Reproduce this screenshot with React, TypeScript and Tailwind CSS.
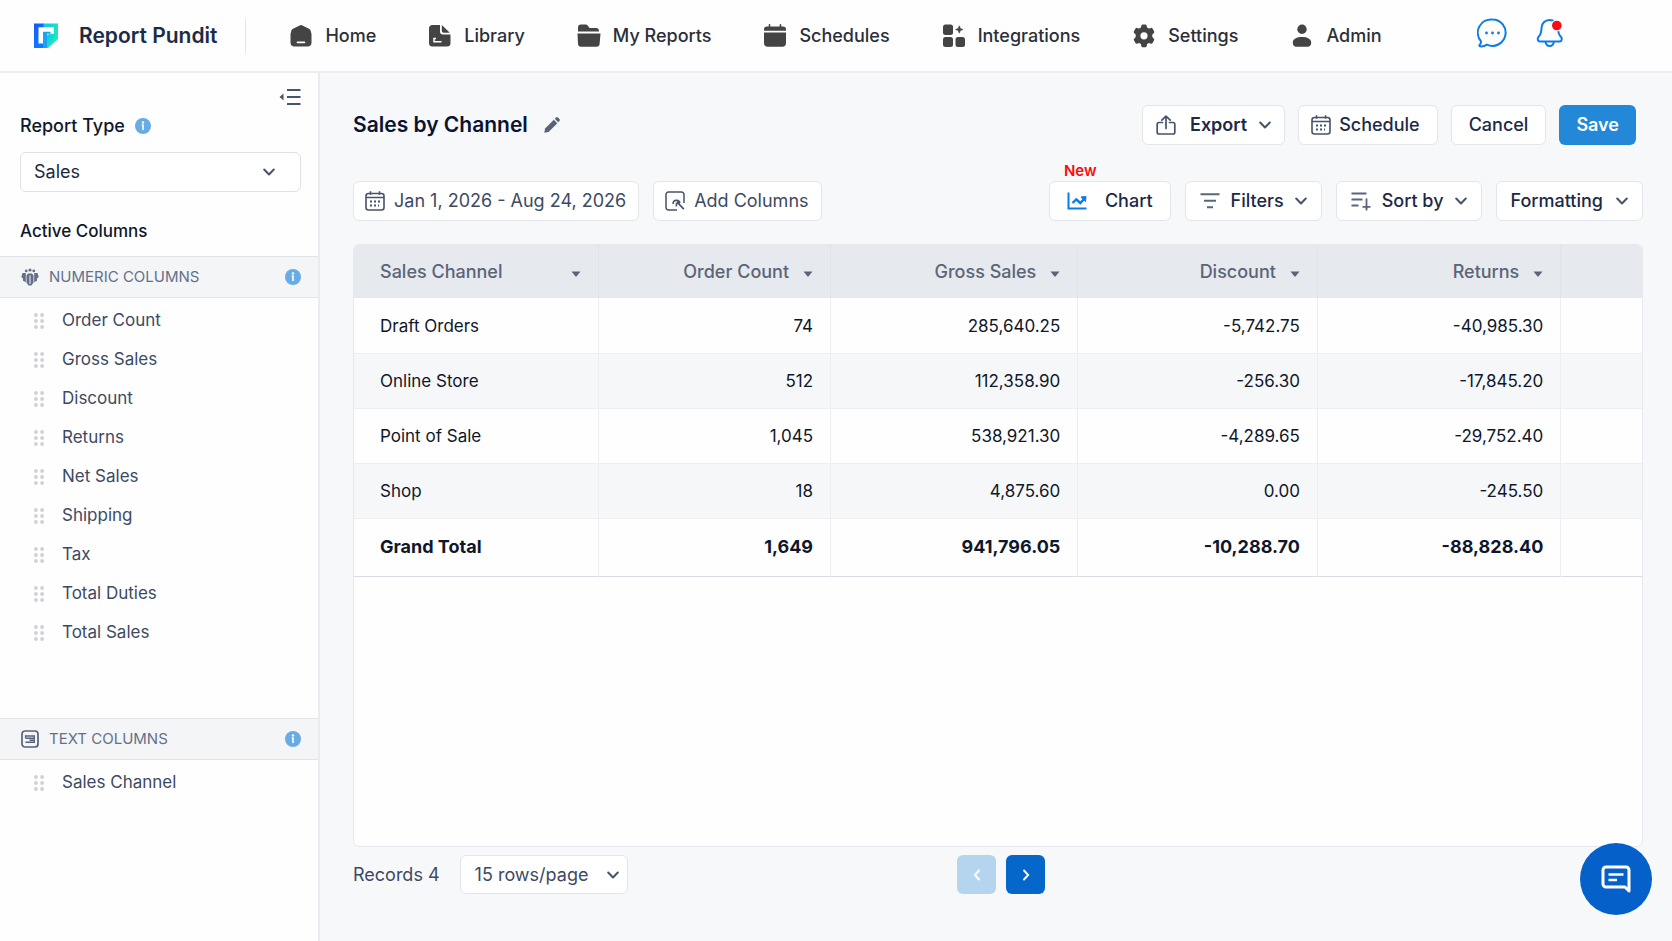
import React from "react";

type IconProps = { className?: string };

function Logo() {
  return (
    <svg className="w-6 h-[26px]" viewBox="0 0 24 26" aria-hidden="true">
      <defs>
        <linearGradient id="logo-left" x1="0" y1="0" x2="0.4" y2="1">
          <stop offset="0" stopColor="#1657ff" />
          <stop offset="1" stopColor="#0a7cff" />
        </linearGradient>
        <linearGradient id="logo-right" x1="0" y1="0" x2="1" y2="0.6">
          <stop offset="0" stopColor="#12c4e8" />
          <stop offset="1" stopColor="#19f0b4" />
        </linearGradient>
      </defs>
      <path d="M0 .5h10v24.500H0z" fill="url(#logo-left)" />
      <path d="M9.500.5H24v15.500L14 25H9.500z" fill="url(#logo-right)" />
      <path d="M4.500 4.300h15.300v6.500H16l-2.500 2v-1L9 20.500H4.500z" fill="#fff" />
      <path d="M9 8.700h7.500v2H13V25H9z" fill="#1aa2f5" />
      <path d="M13.500 11.500h10.500L13.500 21.500z" fill="url(#logo-right)" />
    </svg>
  );
}

function HomeIcon() {
  return (
    <svg className="w-6 h-6" viewBox="0 0 24 24" aria-hidden="true">
      <path
        d="M10.600 1.400a3 3 0 0 1 2.800 0l6.600 3.300a3 3 0 0 1 1.600 1.900l.9 3.400v8.500a4 4 0 0 1-4 4h-13a4 4 0 0 1-4-4V10l.9-3.400A3 3 0 0 1 4 4.700z"
        fill="#444"
      />
      <path d="M8.500 18.300h7" stroke="#fff" strokeWidth="1.700" strokeLinecap="round" />
    </svg>
  );
}

function LibraryIcon() {
  return (
    <svg className="w-6 h-6" viewBox="0 0 24 24" aria-hidden="true">
      <path
        d="M4.500 1h7.500v6.500a3 3 0 0 0 3 3h7.500v8.500a3.500 3.500 0 0 1-3.500 3.500H4.500A3.500 3.500 0 0 1 1 19V4.500A3.500 3.500 0 0 1 4.500 1z"
        fill="#444"
      />
      <path d="M13.800 1l8 7.800h-6a2 2 0 0 1-2-2z" fill="#444" />
      <path d="M8 14.500H6v3.300h7.500" stroke="#fff" strokeWidth="1.500" fill="none" />
    </svg>
  );
}

function FolderIcon() {
  return (
    <svg className="w-6 h-6" viewBox="0 0 24 24" fill="#444" aria-hidden="true">
      <path d="M1 7.500V3.500a3 3 0 0 1 3-3h4.500a3 3 0 0 1 2.400 1.200L12.500 4H19a3 3 0 0 1 3 3v.5z" />
      <path d="M.5 9.500h23L22.600 20a3 3 0 0 1-3 2.700H4a3 3 0 0 1-3-2.700z" />
    </svg>
  );
}

function CalendarSolidIcon() {
  return (
    <svg className="w-6 h-6" viewBox="0 0 24 24" fill="#444" aria-hidden="true">
      <path d="M6.500.8v3M17.500.8v3" stroke="#444" strokeWidth="1.600" strokeLinecap="round" />
      <path d="M1 6.800V5.500A3 3 0 0 1 4 2.500h16a3 3 0 0 1 3 3v1.300z" />
      <path d="M1 8.500h22V19a3.700 3.700 0 0 1-3.700 3.700H4.700A3.700 3.700 0 0 1 1 19z" />
    </svg>
  );
}

function IntegrationsIcon() {
  return (
    <svg className="w-6 h-6" viewBox="0 0 24 24" fill="#444" aria-hidden="true">
      <rect x="1" y="0.500" width="10" height="10.500" rx="2.500" />
      <rect x="1" y="13" width="10" height="10" rx="2.500" />
      <rect x="13.500" y="13" width="9.500" height="10" rx="2.500" />
      <path d="M17.300 1.800l1.100 2.600 2.600 1.100-2.600 1.100-1.100 2.600-1.100-2.600-2.600-1.100 2.600-1.100z" stroke="#444" strokeWidth="0.600" />
    </svg>
  );
}

function GearIcon() {
  return (
    <svg className="w-6 h-6" viewBox="0 0 24 24" fill="#444" aria-hidden="true">
      <path
        fillRule="evenodd"
        d="M10.600.4h2.800c.6 0 1 .4 1.200 1l.5 2.200 1.700 1 2.200-.7c.6-.2 1.200 0 1.500.6l1.600 2.800c.3.600.2 1.200-.2 1.600l-1.600 1.700v2.400l1.600 1.700c.4.400.5 1 .2 1.600l-1.600 2.800c-.3.600-.9.800-1.500.6l-2.200-.7-1.700 1-.5 2.200c-.2.600-.6 1-1.200 1h-2.800c-.6 0-1-.4-1.200-1l-.5-2.200-1.700-1-2.200.7c-.6.2-1.200 0-1.500-.6l-1.600-2.800c-.3-.6-.2-1.200.2-1.600L3.700 13v-2.400L2.100 8.900c-.4-.4-.5-1-.2-1.600l1.600-2.800c.3-.6.9-.8 1.500-.6l2.200.7 1.700-1 .5-2.200c.2-.6.600-1 1.200-1zM12 8.200a3.600 3.600 0 1 0 0 7.200 3.600 3.600 0 0 0 0-7.200z"
      />
    </svg>
  );
}

function UserIcon() {
  return (
    <svg className="w-6 h-6" viewBox="0 0 24 24" fill="#444" aria-hidden="true">
      <circle cx="12" cy="5.200" r="4.700" />
      <path d="M2.800 18.500c0-3.600 4-5.500 9.200-5.500s9.200 1.900 9.200 5.500-2.200 4.300-5 4.300H7.800c-2.800 0-5-.7-5-4.300z" />
    </svg>
  );
}

function ChatIcon() {
  return (
    <svg className="w-[30px] h-[30px]" viewBox="0 0 30 30" fill="none" aria-hidden="true">
      <path
        d="M15.500 1.500a13.200 13.200 0 1 1-5.600 25.200c-1.800 1.200-4.300 1.900-6.900 1.600-.8-.1-.9-.8-.4-1.300 1-1 1.500-2.200 1.300-3.900A13.200 13.200 0 0 1 15.500 1.500z"
        stroke="#0b7be8"
        strokeWidth="2"
        strokeLinejoin="round"
      />
      <circle cx="9.500" cy="15" r="1.400" fill="#0b7be8" />
      <circle cx="15.500" cy="15" r="1.400" fill="#0b7be8" />
      <circle cx="21.500" cy="15" r="1.400" fill="#0b7be8" />
    </svg>
  );
}

function BellIcon() {
  return (
    <svg className="w-[30px] h-[30px]" viewBox="0 0 30 30" fill="none" aria-hidden="true">
      <path
        d="M14.500 2C9.800 2 6.800 5.400 6.600 9.500c-.2 4.800-.6 7-3 9.300-1.600 1.600-1 4.700 1.400 4.700h19.500c2.400 0 3-3.100 1.400-4.700-2.300-2.300-2.900-4.500-3.100-9.300C22.600 5.400 19.200 2 14.500 2z"
        stroke="#0b7be8"
        strokeWidth="2"
      />
      <path d="M10.500 24c.5 2.600 2 4 4.200 4s3.700-1.400 4.200-4" stroke="#0b7be8" strokeWidth="2" />
      <circle cx="21.800" cy="7.500" r="6" fill="#fff" />
      <circle cx="21.800" cy="7.500" r="4.800" fill="#ff0a14" />
    </svg>
  );
}

function CollapseIcon() {
  return (
    <svg className="w-[22px] h-[18px]" viewBox="0 0 22 18" aria-hidden="true">
      <path d="M8 2h13.500M8 9h13.500M8 16h13.500" stroke="#475569" strokeWidth="1.900" />
      <path d="M4.500 5.500v7L.5 9z" fill="#475569" />
    </svg>
  );
}

function InfoIcon() {
  return (
    <svg className="w-4 h-4" viewBox="0 0 16 16" aria-hidden="true">
      <circle cx="8" cy="8" r="8" fill="#67ace4" />
      <circle cx="8" cy="4.400" r="1.200" fill="#fff" />
      <path d="M6.700 7H8v5" stroke="#fff" strokeWidth="1.600" fill="none" />
    </svg>
  );
}

function Chevron({ className = "" }: IconProps) {
  return (
    <svg className={`w-3 h-3 text-[#475569] ${className}`} viewBox="0 0 12 12" fill="none" aria-hidden="true">
      <path d="M1.200 3.500L6 8.500l4.800-5" stroke="currentColor" strokeWidth="2" strokeLinecap="round" strokeLinejoin="round" />
    </svg>
  );
}

function GripIcon() {
  return (
    <svg className="w-[10px] h-4" viewBox="0 0 10 16" fill="#cfd1d8" aria-hidden="true">
      <circle cx="1.900" cy="2" r="1.900" />
      <circle cx="8.100" cy="2" r="1.900" />
      <circle cx="1.900" cy="8" r="1.900" />
      <circle cx="8.100" cy="8" r="1.900" />
      <circle cx="1.900" cy="14" r="1.900" />
      <circle cx="8.100" cy="14" r="1.900" />
    </svg>
  );
}

function NumericIcon() {
  return (
    <svg className="w-[18px] h-[18px]" viewBox="0 0 18 18" fill="#64708a" aria-hidden="true">
      <path d="M5.500 7.500l1.500-2h4l1.500 2v7L10.500 17.500h-3l-2-3z" />
      <path d="M9 7.500V16" stroke="#f4f5f6" strokeWidth="1" />
      <circle cx="9" cy="2" r="1.600" />
      <circle cx="5.200" cy="2.900" r="1.400" />
      <circle cx="12.800" cy="2.900" r="1.400" />
      <path d="M4.800 5v9.300L2 12.800V10.500L.3 9 1.500 5z" />
      <path d="M13.200 5v9.300l2.800-1.500v-2.300L17.700 9l-1.200-4z" />
    </svg>
  );
}

function TextIcon() {
  return (
    <svg className="w-[18px] h-[18px]" viewBox="0 0 18 18" fill="none" stroke="#566179" aria-hidden="true">
      <rect x="1" y="1" width="16" height="16" rx="3" strokeWidth="1.700" />
      <path d="M4 6h10M5 8.200h8.500M8.500 10.300h5M4.500 12.300h9.500" strokeWidth="1.600" />
      <path d="M4.500 5.500v3M13.300 6v6" strokeWidth="1.200" />
    </svg>
  );
}

function PencilIcon() {
  return (
    <svg className="w-4 h-4" viewBox="0 0 16 16" fill="#586379" aria-hidden="true">
      <path d="M.3 15.700l.8-4.300L9.800 2.800l3.500 3.500-8.700 8.600z" />
      <path d="M10.800 1.800L12 .6a1.400 1.400 0 0 1 2 0L15.400 2a1.400 1.400 0 0 1 0 2l-1.200 1.200z" />
    </svg>
  );
}

function CalendarIcon() {
  return (
    <svg className="w-5 h-5" viewBox="0 0 20 20" fill="none" stroke="#47536a" aria-hidden="true">
      <rect x="1" y="2.500" width="18" height="16.500" rx="2.500" strokeWidth="1.600" />
      <path d="M1 6.500h18" strokeWidth="1.500" />
      <path d="M5.500.3v3.500M14.500.3v3.500" strokeWidth="1.600" />
      <path d="M5 10.500h2M9 10.500h2M13 10.500h2M5 14.500h2M9 14.500h2M13 14.500h1" strokeWidth="1.800" />
    </svg>
  );
}

function AddColumnsIcon() {
  return (
    <svg className="w-5 h-5" viewBox="0 0 20 20" fill="none" stroke="#47536a" aria-hidden="true">
      <path
        d="M12 19H3.500A2.500 2.500 0 0 1 1 16.500v-13A2.500 2.500 0 0 1 3.500 1h13A2.500 2.500 0 0 1 19 3.500V12"
        strokeWidth="1.500"
      />
      <path d="M8.300 13c-.6-2.200.9-3.900 3.400-3.700 1.800.2 2.900 1.300 3.100 2.900M12.500 11.500l6.300 6.700M11.300 15.300l.4-3.600M12 11.500l3 .5" strokeWidth="1.700" />
    </svg>
  );
}

function ExportIcon() {
  return (
    <svg className="w-5 h-5" viewBox="0 0 20 20" fill="none" stroke="#47536a" strokeWidth="1.700" strokeLinecap="round" strokeLinejoin="round" aria-hidden="true">
      <path d="M6.500 7.500H3A1.800 1.800 0 0 0 1.200 9.300v7.900A1.800 1.800 0 0 0 3 19h14a1.800 1.800 0 0 0 1.800-1.800V9.300A1.800 1.800 0 0 0 17 7.500h-3.500" />
      <path d="M10 13.500V1.200M5.800 5.200L10 1.200l4.200 4" />
    </svg>
  );
}

function ChartIcon() {
  return (
    <svg className="w-5 h-5" viewBox="0 0 20 20" fill="none" stroke="#0b7be8" strokeWidth="2" aria-hidden="true">
      <path d="M1.500 1.500v16h18" />
      <path d="M5.500 12l3.800-3.700 4 3.700 4.700-5" strokeWidth="2.400" />
      <path d="M14 6l5-.5-.5 5z" fill="#0b7be8" strokeWidth="1" />
    </svg>
  );
}

function FilterIcon() {
  return (
    <svg className="w-5 h-5" viewBox="0 0 20 20" fill="none" stroke="#5a667c" strokeWidth="1.900" aria-hidden="true">
      <path d="M.5 3.200h19M4 9.700h12M7 16.200h6" />
    </svg>
  );
}

function SortIcon() {
  return (
    <svg className="w-5 h-5" viewBox="0 0 20 20" fill="none" stroke="#5a667c" strokeWidth="1.900" aria-hidden="true">
      <path d="M.5 2.500h15M.5 8.500h11M.5 14.500h7" />
      <path d="M15.500 7.500v11.500M11.500 15.800h3.300l.7 2 .7-2h3.300" strokeWidth="1.800" />
    </svg>
  );
}

const navItems = [
  { label: "Home", icon: HomeIcon },
  { label: "Library", icon: LibraryIcon },
  { label: "My Reports", icon: FolderIcon },
  { label: "Schedules", icon: CalendarSolidIcon },
  { label: "Integrations", icon: IntegrationsIcon },
  { label: "Settings", icon: GearIcon },
  { label: "Admin", icon: UserIcon },
];

const numericColumns = [
  "Order Count",
  "Gross Sales",
  "Discount",
  "Returns",
  "Net Sales",
  "Shipping",
  "Tax",
  "Total Duties",
  "Total Sales",
];

const tableColumns = ["Sales Channel", "Order Count", "Gross Sales", "Discount", "Returns"];

const rows = [
  ["Draft Orders", "74", "285,640.25", "-5,742.75", "-40,985.30"],
  ["Online Store", "512", "112,358.90", "-256.30", "-17,845.20"],
  ["Point of Sale", "1,045", "538,921.30", "-4,289.65", "-29,752.40"],
  ["Shop", "18", "4,875.60", "0.00", "-245.50"],
];

const totals = ["Grand Total", "1,649", "941,796.05", "-10,288.70", "-88,828.40"];

function Header() {
  return (
    <header className="flex items-center h-[73px] pl-[34px] pr-[107px] bg-[#fefefe] border-b-2 border-[#eceef2]">
      <a href="#" className="flex items-center gap-[21px]">
        <Logo />
        <span className="text-[21px] font-semibold text-[#1c2b46]">Report Pundit</span>
      </a>
      <div className="w-px h-[34px] ml-7 bg-[#e2e4e9]" />
      <nav className="flex items-center gap-[52px] ml-[43px]">
        {navItems.map(({ label, icon: Icon }) => (
          <a key={label} href="#" className="flex items-center gap-3 text-lg font-medium text-[#2b2f38] whitespace-nowrap">
            <Icon />
            {label}
          </a>
        ))}
      </nav>
      <div className="flex items-center gap-7 ml-auto pb-[6px]">
        <button type="button" aria-label="Messages">
          <ChatIcon />
        </button>
        <button type="button" aria-label="Notifications">
          <BellIcon />
        </button>
      </div>
    </header>
  );
}

type SectionProps = {
  title: string;
  icon: React.ReactNode;
  items: string[];
};

function ColumnSection({ title, icon, items }: SectionProps) {
  return (
    <section>
      <div className="flex items-center h-[42px] pl-[21px] pr-[17px] bg-[#f4f5f6] border-y border-[#e2e4ea]">
        {icon}
        <h3 className="ml-[10px] text-[15px] text-[#64708a]">{title}</h3>
        <button type="button" className="ml-auto" aria-label={`About ${title.toLowerCase()}`}>
          <InfoIcon />
        </button>
      </div>
      <ul className="pt-[3px]">
        {items.map((item) => (
          <li key={item} className="flex items-center gap-[18px] h-[39px] pl-[34px] text-[17px] text-[#3d4a63]">
            <GripIcon />
            {item}
          </li>
        ))}
      </ul>
    </section>
  );
}

function Sidebar() {
  return (
    <aside className="w-[320px] shrink-0 bg-[#fefefe] border-r-2 border-[#e9ebf0]">
      <div className="pl-5 pr-[17px]">
        <div className="flex justify-end pt-[15px]">
          <button type="button" aria-label="Collapse sidebar">
            <CollapseIcon />
          </button>
        </div>
        <div className="flex items-center gap-[10px] mt-2">
          <label htmlFor="report-type" className="text-lg leading-6 font-medium text-[#0f172a]">
            Report Type
          </label>
          <InfoIcon />
        </div>
        <div className="relative mt-[14px]">
          <select
            id="report-type"
            className="appearance-none w-full h-10 px-[13px] text-lg text-[#1e293b] bg-white border border-[#dfe2ea] rounded-md"
          >
            <option>Sales</option>
          </select>
          <Chevron className="absolute right-[26px] top-[14px] pointer-events-none" />
        </div>
        <h2 className="mt-[27px] mb-[13px] text-[17px] leading-6 font-medium text-[#0f172a]">Active Columns</h2>
      </div>
      <ColumnSection title="NUMERIC COLUMNS" icon={<NumericIcon />} items={numericColumns} />
      <div className="h-[66px]" />
      <ColumnSection title="TEXT COLUMNS" icon={<TextIcon />} items={["Sales Channel"]} />
    </aside>
  );
}

type ButtonProps = {
  children: React.ReactNode;
  className?: string;
};

function Button({ children, className = "" }: ButtonProps) {
  return (
    <button
      type="button"
      className={`flex items-center h-10 text-lg whitespace-nowrap bg-white border border-[#e2e5ea] rounded-md ${className}`}
    >
      {children}
    </button>
  );
}

function ReportTable() {
  return (
    <div className="flex-1 bg-[#fefefe] border border-[#e6e8ed] rounded-md overflow-hidden">
      <table className="w-full table-fixed border-collapse text-[17px] text-[#0f172a]">
        <colgroup>
          <col className="w-[19%]" />
          <col className="w-[18%]" />
          <col className="w-[19.200%]" />
          <col className="w-[18.600%]" />
          <col className="w-[18.900%]" />
          <col />
        </colgroup>
        <thead>
          <tr className="h-[53px] bg-[#e6e9ee] text-lg text-[#5b6478]">
            {tableColumns.map((name, i) => (
              <th key={name} className="pl-[26px] pr-[17px] font-medium border-r border-[#dfe2e8]">
                <div className={`flex items-center gap-[14px] ${i === 0 ? "justify-between" : "justify-end"}`}>
                  {name}
                  <button type="button" aria-label={`Options for ${name}`} className="flex pt-1">
                    <svg className="w-[10px] h-[6px]" viewBox="0 0 10 6" aria-hidden="true">
                      <path d="M.5.500h9L5.500 5.500h-1z" fill="#5b6478" />
                    </svg>
                  </button>
                </div>
              </th>
            ))}
            <th aria-label="More columns" />
          </tr>
        </thead>
        <tbody>
          {rows.map((row) => (
            <tr key={row[0]} className="h-[55px] even:bg-[#f6f7f9] border-b border-[#eceef2]">
              {row.map((value, i) => (
                <td key={i} className={`pt-0.5 pl-[26px] pr-[17px] border-r border-[#eceef2] ${i === 0 ? "text-left" : "text-right"}`}>
                  {value}
                </td>
              ))}
              <td />
            </tr>
          ))}
        </tbody>
        <tfoot>
          <tr className="h-[58px] text-lg font-bold border-b border-[#d9dce4]">
            {totals.map((value, i) => (
              <td key={i} className={`pl-[26px] pr-[17px] border-r border-[#eceef2] ${i === 0 ? "text-left" : "text-right"}`}>
                {value}
              </td>
            ))}
            <td />
          </tr>
        </tfoot>
      </table>
    </div>
  );
}

export default function App() {
  return (
    <div className="flex flex-col min-h-screen bg-[#f7f8fa] font-['Inter',sans-serif]">
      <Header />
      <div className="flex flex-1">
        <Sidebar />
        <main className="flex flex-col flex-1 min-w-0 pl-[33px] pr-[29px]">
          <div className="flex items-center gap-4 pt-8 pr-[7px]">
            <h1 className="text-[21px] font-semibold text-[#0b1330]">Sales by Channel</h1>
            <button type="button" aria-label="Rename report">
              <PencilIcon />
            </button>
            <div className="flex gap-[13px] ml-auto">
              <Button className="px-[13px] font-semibold text-[#1c2a45]">
                <ExportIcon />
                <span className="ml-[14px] mr-3">Export</span>
                <Chevron />
              </Button>
              <Button className="gap-2 pl-3 pr-[17px] font-medium text-[#1c2a45]">
                <CalendarIcon />
                Schedule
              </Button>
              <Button className="px-[17px] font-medium text-[#1c2a45]">Cancel</Button>
              <button type="button" className="h-10 px-[17px] text-lg font-semibold text-white bg-[#2488d8] rounded-md">
                Save
              </button>
            </div>
          </div>

          <div className="flex items-center gap-[14px] mt-9">
            <Button className="gap-[9px] pl-[11px] pr-3 text-[#3d4a63]">
              <CalendarIcon />
              Jan 1, 2026 - Aug 24, 2026
            </Button>
            <Button className="gap-[9px] pl-[11px] pr-3 text-[#3d4a63]">
              <AddColumnsIcon />
              Add Columns
            </Button>
            <div className="flex gap-[14px] ml-auto">
              <div className="relative">
                <span className="absolute left-[15px] -top-5 text-[15px] leading-5 font-semibold text-[#ff0a0a]">New</span>
                <Button className="gap-[18px] px-[17px] font-medium text-[#1c2a45]">
                  <ChartIcon />
                  Chart
                </Button>
              </div>
              <Button className="gap-[11px] px-[14px] font-medium text-[#1c2a45]">
                <FilterIcon />
                Filters
                <Chevron />
              </Button>
              <Button className="gap-[11px] px-[14px] font-medium text-[#1c2a45]">
                <SortIcon />
                Sort by
                <Chevron />
              </Button>
              <Button className="gap-[13px] px-[14px] font-medium text-[#1c2a45]">
                Formatting
                <Chevron />
              </Button>
            </div>
          </div>

          <div className="flex flex-col flex-1 mt-[23px]">
            <ReportTable />
          </div>

          <footer className="grid grid-cols-[1fr_auto_1fr] items-center pt-2 pb-[47px]">
            <div className="flex items-center gap-5 text-lg text-[#3d4a63]">
              <span>Records 4</span>
              <div className="relative">
                <select
                  aria-label="Rows per page"
                  className="appearance-none w-[168px] h-[39px] pl-[14px] pr-9 bg-white border border-[#e2e5ea] rounded-md"
                >
                  <option>15 rows/page</option>
                </select>
                <Chevron className="absolute right-[9px] top-[14px] pointer-events-none" />
              </div>
            </div>
            <div className="flex gap-[10px] pl-[6px]">
              <button
                type="button"
                disabled
                aria-label="Previous page"
                className="flex items-center justify-center w-[39px] h-[39px] bg-[#b5d5ef] rounded-md"
              >
                <svg className="w-3 h-3" viewBox="0 0 12 12" fill="none" aria-hidden="true">
                  <path d="M8 1.500L3.800 6 8 10.500" stroke="#fff" strokeWidth="1.900" strokeLinecap="round" />
                </svg>
              </button>
              <button
                type="button"
                aria-label="Next page"
                className="flex items-center justify-center w-[39px] h-[39px] bg-[#0567c9] rounded-md"
              >
                <svg className="w-3 h-3" viewBox="0 0 12 12" fill="none" aria-hidden="true">
                  <path d="M4 1.500L8.200 6 4 10.500" stroke="#fff" strokeWidth="1.900" strokeLinecap="round" />
                </svg>
              </button>
            </div>
          </footer>
        </main>
      </div>

      <button
        type="button"
        aria-label="Open chat"
        className="fixed right-5 bottom-[26px] flex items-center justify-center w-[72px] h-[72px] bg-[#0660ca] rounded-full"
      >
        <svg className="w-[30px] h-[28px]" viewBox="0 0 30 28" fill="none" stroke="#fff" aria-hidden="true">
          <path
            d="M5 2h20a3 3 0 0 1 3 3v21l-4-4H5a3 3 0 0 1-3-3V5a3 3 0 0 1 3-3z"
            strokeWidth="3"
            strokeLinejoin="round"
          />
          <path d="M7.500 9.500h15M7.500 15h8.500" strokeWidth="2.600" />
        </svg>
      </button>
    </div>
  );
}
